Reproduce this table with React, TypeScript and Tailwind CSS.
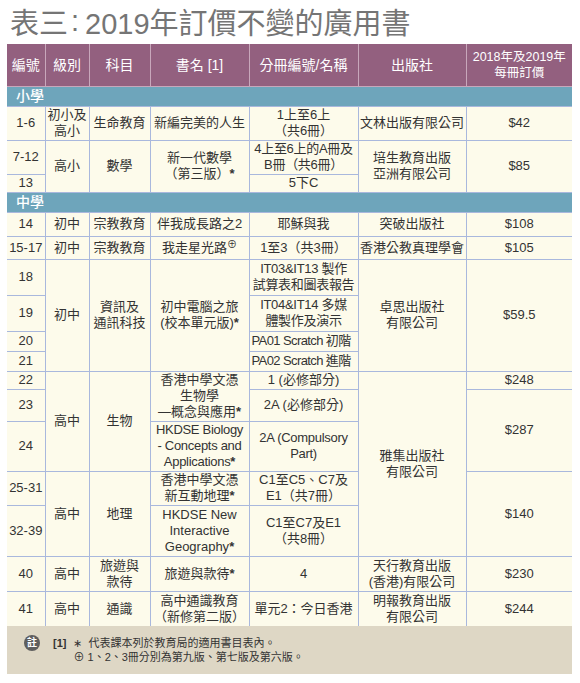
import React from "react";

const FONT = { fontFamily: '"Liberation Sans", "Noto Sans CJK TC", sans-serif' };

const td =
  "border border-[#a9b8dd] text-center align-middle px-[1px] leading-[16px] text-[13px] text-[#333]";
const th =
  "border border-[#c8a7bb] border-t-0 text-center align-middle font-normal text-white leading-[16px]";

const Star = () => <span className="font-bold">*</span>;

export default function App() {
  return (
    <div className="w-[580px] h-[683px] bg-white" style={FONT}>
      <div className="h-[44px] pl-[10px] pt-[6px] text-[29px] leading-[36px] text-[#757575]">
        表三<span className="relative top-[-3px] ml-[3px] mr-[6px]">:</span>2019年訂價不變的廣用書
      </div>
      <div className="pl-[7px]">
        <table className="w-[565px] table-fixed border-collapse bg-[#fdfbeb]">
          <colgroup>
            <col className="w-[38px]" />
            <col className="w-[44px]" />
            <col className="w-[61px]" />
            <col className="w-[99px]" />
            <col className="w-[109px]" />
            <col className="w-[108px]" />
            <col className="w-[106px]" />
          </colgroup>
          <tbody>
            <tr className="h-[42px] bg-[#93607f]">
              <th className={`${th} border-l-0 text-[14px]`}>編號</th>
              <th className={`${th} text-[14px]`}>級別</th>
              <th className={`${th} text-[14px]`}>科目</th>
              <th className={`${th} text-[14px]`}>書名 [1]</th>
              <th className={`${th} text-[14px]`}>分冊編號/名稱</th>
              <th className={`${th} text-[14px]`}>出版社</th>
              <th className={`${th} border-r-0 text-[12.5px]`}>
                2018年及2019年
                <br />
                每冊訂價
              </th>
            </tr>
            <tr className="h-[20px] bg-[#6ea5bb]">
              <td colSpan={7} className="pl-[9px] text-[14px] font-medium text-white leading-[18px]">
                小學
              </td>
            </tr>
            <tr className="h-[34px]">
              <td className={`${td} border-l-0`}>1-6</td>
              <td className={td}>
                初小及
                <br />
                高小
              </td>
              <td className={td}>生命教育</td>
              <td className={td}>新編完美的人生</td>
              <td className={td}>
                1上至6上
                <br />
                （共6冊）
              </td>
              <td className={td}>文林出版有限公司</td>
              <td className={`${td} border-r-0`}>$42</td>
            </tr>
            <tr className="h-[34px]">
              <td className={`${td} border-l-0`}>7-12</td>
              <td rowSpan={2} className={td}>高小</td>
              <td rowSpan={2} className={td}>數學</td>
              <td rowSpan={2} className={td}>
                新一代數學
                <br />
                （第三版）<Star />
              </td>
              <td className={`${td} tracking-[-0.3px]`}>
                4上至6上的A冊及
                <br />
                B冊（共6冊）
              </td>
              <td rowSpan={2} className={td}>
                培生教育出版
                <br />
                亞洲有限公司
              </td>
              <td rowSpan={2} className={`${td} border-r-0`}>$85</td>
            </tr>
            <tr className="h-[18px]">
              <td className={`${td} border-l-0`}>13</td>
              <td className={td}>5下C</td>
            </tr>
            <tr className="h-[20px] bg-[#6ea5bb]">
              <td colSpan={7} className="pl-[9px] text-[14px] font-medium text-white leading-[18px]">
                中學
              </td>
            </tr>
            <tr className="h-[24px]">
              <td className={`${td} border-l-0`}>14</td>
              <td className={td}>初中</td>
              <td className={td}>宗教教育</td>
              <td className={td}>伴我成長路之2</td>
              <td className={td}>耶穌與我</td>
              <td className={td}>突破出版社</td>
              <td className={`${td} border-r-0`}>$108</td>
            </tr>
            <tr className="h-[23px]">
              <td className={`${td} border-l-0`}>15-17</td>
              <td className={td}>初中</td>
              <td className={td}>宗教教育</td>
              <td className={td}>
                我走星光路
                <span className="relative top-[-4px] text-[10px] leading-none">⊕</span>
              </td>
              <td className={td}>1至3（共3冊）</td>
              <td className={td}>香港公教真理學會</td>
              <td className={`${td} border-r-0`}>$105</td>
            </tr>
            <tr className="h-[36px]">
              <td className={`${td} border-l-0`}>18</td>
              <td rowSpan={4} className={td}>初中</td>
              <td rowSpan={4} className={td}>
                資訊及
                <br />
                通訊科技
              </td>
              <td rowSpan={4} className={td}>
                初中電腦之旅
                <br />
                (校本單元版)<Star />
              </td>
              <td className={`${td} whitespace-nowrap tracking-[-0.3px]`}>
                IT03&amp;IT13 製作
                <br />
                試算表和圖表報告
              </td>
              <td rowSpan={4} className={td}>
                卓思出版社
                <br />
                有限公司
              </td>
              <td rowSpan={4} className={`${td} border-r-0`}>$59.5</td>
            </tr>
            <tr className="h-[36px]">
              <td className={`${td} border-l-0`}>19</td>
              <td className={`${td} whitespace-nowrap tracking-[-0.3px]`}>
                IT04&amp;IT14 多媒
                <br />
                體製作及演示
              </td>
            </tr>
            <tr className="h-[20px]">
              <td className={`${td} border-l-0`}>20</td>
              <td className={`${td} whitespace-nowrap tracking-[-0.6px] text-left pl-[2px]`}>PA01 Scratch 初階</td>
            </tr>
            <tr className="h-[20px]">
              <td className={`${td} border-l-0`}>21</td>
              <td className={`${td} whitespace-nowrap tracking-[-0.6px] text-left pl-[2px]`}>PA02 Scratch 進階</td>
            </tr>
            <tr className="h-[18px]">
              <td className={`${td} border-l-0`}>22</td>
              <td rowSpan={3} className={td}>高中</td>
              <td rowSpan={3} className={td}>生物</td>
              <td rowSpan={2} className={td}>
                香港中學文憑
                <br />
                生物學
                <br />
                —概念與應用<Star />
              </td>
              <td className={td}>1 (必修部分)</td>
              <td rowSpan={5} className={td}>
                雅集出版社
                <br />
                有限公司
              </td>
              <td className={`${td} border-r-0`}>$248</td>
            </tr>
            <tr className="h-[32px]">
              <td className={`${td} border-l-0`}>23</td>
              <td className={td}>2A (必修部分)</td>
              <td rowSpan={2} className={`${td} border-r-0`}>$287</td>
            </tr>
            <tr className="h-[50px]">
              <td className={`${td} border-l-0`}>24</td>
              <td className={`${td} tracking-[-0.3px]`}>
                HKDSE Biology
                <br />- Concepts and
                <br />
                Applications<Star />
              </td>
              <td className={`${td} whitespace-nowrap tracking-[-0.3px]`}>
                2A (Compulsory
                <br />
                Part)
              </td>
            </tr>
            <tr className="h-[34px]">
              <td className={`${td} border-l-0`}>25-31</td>
              <td rowSpan={2} className={td}>高中</td>
              <td rowSpan={2} className={td}>地理</td>
              <td className={td}>
                香港中學文憑
                <br />
                新互動地理<Star />
              </td>
              <td className={`${td} whitespace-nowrap`}>
                C1至C5、C7及
                <br />
                E1（共7冊）
              </td>
              <td rowSpan={2} className={`${td} border-r-0`}>$140</td>
            </tr>
            <tr className="h-[51px]">
              <td className={`${td} border-l-0`}>32-39</td>
              <td className={td}>
                HKDSE New
                <br />
                Interactive
                <br />
                Geography<Star />
              </td>
              <td className={td}>
                C1至C7及E1
                <br />
                （共8冊）
              </td>
            </tr>
            <tr className="h-[35px]">
              <td className={`${td} border-l-0`}>40</td>
              <td className={td}>高中</td>
              <td className={td}>
                旅遊與
                <br />
                款待
              </td>
              <td className={td}>
                旅遊與款待<Star />
              </td>
              <td className={td}>4</td>
              <td className={td}>
                天行教育出版
                <br />
                (香港)有限公司
              </td>
              <td className={`${td} border-r-0`}>$230</td>
            </tr>
            <tr className="h-[35px]">
              <td className={`${td} border-l-0 border-b-0`}>41</td>
              <td className={`${td} border-b-0`}>高中</td>
              <td className={`${td} border-b-0`}>通識</td>
              <td className={`${td} border-b-0`}>
                高中通識教育
                <br />
                （新修第二版）
              </td>
              <td className={`${td} border-b-0`}>單元2：今日香港</td>
              <td className={`${td} border-b-0`}>
                明報教育出版
                <br />
                有限公司
              </td>
              <td className={`${td} border-r-0 border-b-0`}>$244</td>
            </tr>
          </tbody>
        </table>
        <div className="w-[565px] h-[48px] bg-[#ded7c5] flex items-start pt-[10px] text-[11px] leading-[14px] text-[#333]">
          <div className="ml-[17px] mt-[-1px] w-[16px] h-[16px] rounded-full bg-[#5e5e5e] text-white text-[10px] leading-[16px] text-center font-bold">
            註
          </div>
          <div className="ml-[13px] font-bold">[1]</div>
          <div className="ml-[7px] flex flex-col">
            <div>∗ &nbsp;代表課本列於教育局的適用書目表內。</div>
            <div>⊕ 1、2、3冊分別為第九版、第七版及第六版。</div>
          </div>
        </div>
      </div>
    </div>
  );
}
